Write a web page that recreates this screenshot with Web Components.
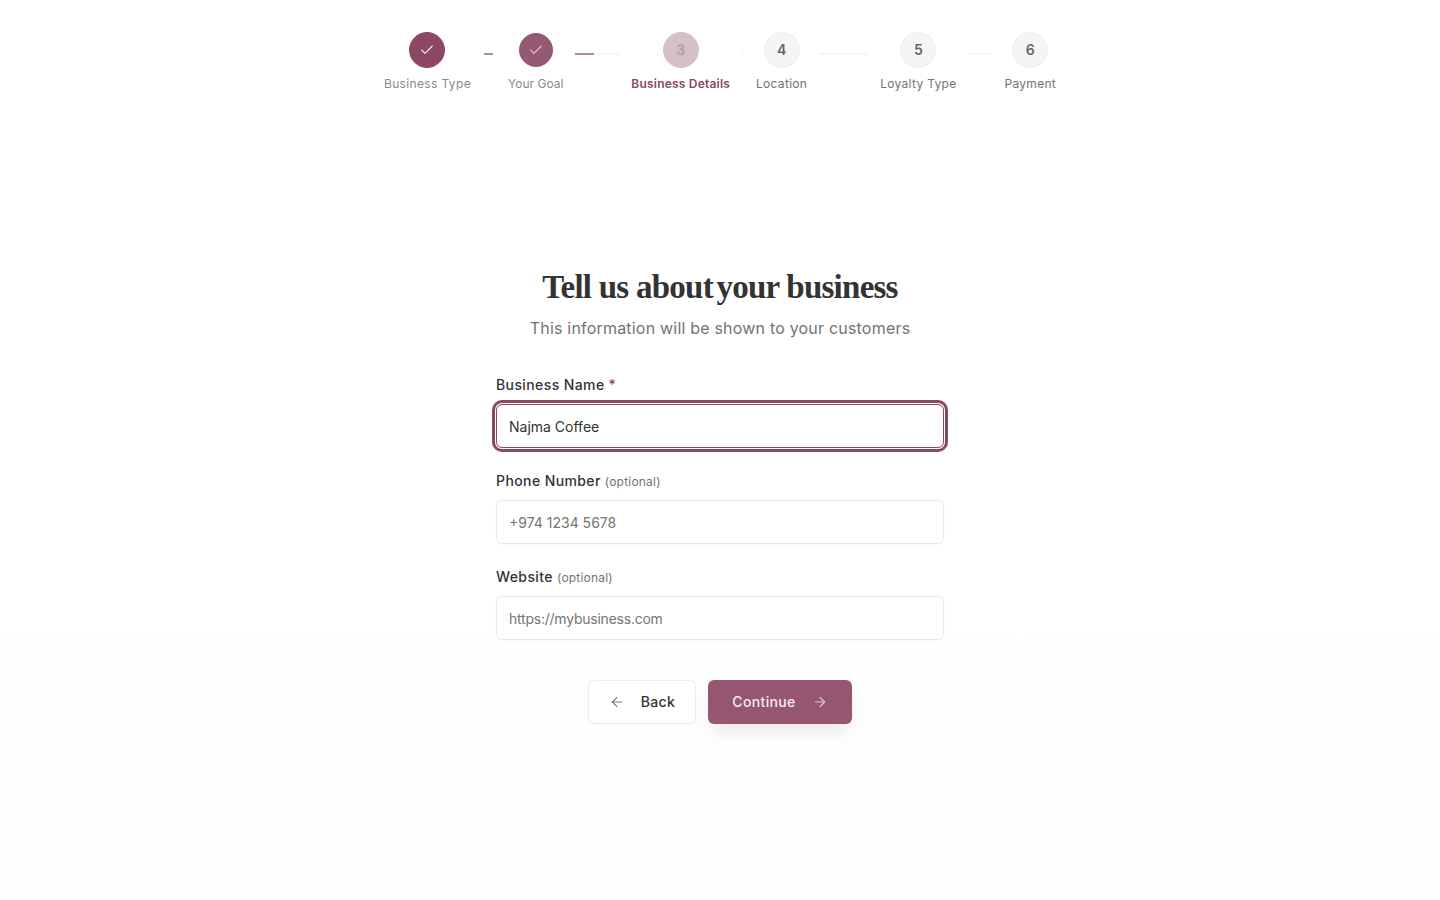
<!DOCTYPE html>
<html><head><meta charset="utf-8"><title>Tell us about your business</title>
<style>
html,body{margin:0;padding:0;height:100%}
body{background:linear-gradient(180deg,#fff 600px,#fdfdfd 909px);font-family:Inter,"Liberation Sans",sans-serif;color:#333;}
</style></head><body>
<onboard-page>
  <step-bar slot="top">
    <step-item state="done" label="Business Type" num="1"></step-item>
    <step-line w="13" f="9" fx="1"></step-line>
    <step-item state="done2" label="Your Goal" num="2"></step-item>
    <step-line w="44" f="19"></step-line>
    <step-item state="current" label="Business Details" num="3"></step-item>
    <step-line w="2" f="0"></step-line>
    <step-item label="Location" num="4"></step-item>
    <step-line w="49" f="0"></step-line>
    <step-item label="Loyalty Type" num="5"></step-item>
    <step-line w="24" f="0"></step-line>
    <step-item label="Payment" num="6"></step-item>
  </step-bar>
  <form-head sub="This information will be shown to your customers"></form-head>
  <form-field label="Business Name" req focus value="Najma Coffee"></form-field>
  <form-field label="Phone Number" opt placeholder="+974 1234 5678"></form-field>
  <form-field label="Website" opt ls="-.23" placeholder="https://mybusiness.com"></form-field>
  <form-actions></form-actions>
</onboard-page>
<script>
function def(name,css,render){
  customElements.define(name,class extends HTMLElement{
    connectedCallback(){
      if(this.shadowRoot)return;
      const r=this.attachShadow({mode:'open'});
      r.innerHTML='<style>'+css+'</style>'+render(this);
    }
  });
}
const a=(e,n)=>e.getAttribute(n);
def('onboard-page',`:host{display:flex;flex-direction:column;align-items:center;min-height:100vh;box-sizing:border-box;padding-top:32px}`,
  ()=>`<slot name="top"></slot><slot></slot>`);
def('step-bar',`:host{display:flex;align-items:flex-start;justify-content:center;width:100%}`,()=>`<slot></slot>`);
def('step-item',`:host{display:flex;flex-direction:column;align-items:center;gap:8px;flex:none}
  .c{width:36px;height:36px;box-sizing:border-box;border-radius:50%;display:flex;align-items:center;justify-content:center;background:#f5f5f5;border:1px solid #eeeeee;color:#666;font-size:14px;font-weight:600;padding-bottom:1px}
  .l{font-size:12px;line-height:16px;color:#737373;letter-spacing:.3px;white-space:nowrap}
  .done{background:#8b4763;border-color:#8b4763;color:#fff;padding:0}
  .done2{background:#965872;border:1px solid #965872;color:#fff;width:34px;height:34px;margin:1px 0;padding:0}
  .current{background:#d7bfca;border:1px solid #d3bfc9;color:#b29ca8}
  .lc{color:#8b4763;font-weight:600;letter-spacing:.2px}
  .l.ld{color:#8a8a8a;letter-spacing:.36px}
  .l.g{letter-spacing:0}`,
  e=>{const s=a(e,'state')||'';const check=s.startsWith('done');
    return `<div class="c ${s}">${check?`<svg width="16" height="16" viewBox="0 0 24 24" fill="none" stroke="${s=='done'?'#f6eef1':'#dcc6d0'}" stroke-width="1.6" stroke-linecap="round" stroke-linejoin="round"><path d="M20 6 9 17l-5-5"/></svg>`:a(e,'num')}</div><div class="l ${s=='current'?'lc':''} ${check?'ld':''} ${s=='done2'?'g':''}">${a(e,'label')}</div>`});
def('step-line',`:host{display:block;flex:none;height:2px;margin:21px 12px 0;background:#f5f5f5;position:relative;overflow:hidden}
  i{display:block;height:100%;background:#ad8a9a}`,
  e=>{e.style.width=a(e,'w')+'px';if(a(e,'fx')){e.style.background='transparent'}return `<i style="width:${a(e,'f')}px;margin-left:${a(e,'fx')||0}px"></i>`});
def('form-head',`:host{display:block;width:448px;text-align:center;margin-top:173px;margin-bottom:35px}
  h1{margin:0;font:700 33px/44px "Liberation Serif",serif;color:#333;letter-spacing:-.75px;white-space:nowrap}
  h1 span{margin-right:-4px}
  p{margin:7px 0 0;font-size:16px;line-height:24px;color:#737373;letter-spacing:.2px;white-space:nowrap}`,
  e=>`<h1>Tell us <span>about</span> your business</h1><p>${a(e,'sub')}</p>`);
def('form-field',`:host{display:block;width:448px;margin-bottom:23px}
  .lb{display:flex;align-items:baseline;gap:4px;height:20px;font-size:14px;line-height:20px;font-weight:500;color:#333;letter-spacing:.4px;margin-bottom:9px;white-space:pre}
  .opt{font-size:12px;font-weight:400;color:#737373;letter-spacing:.2px}
  .req{color:#8b4763}
  .in{height:44px;box-sizing:border-box;border:1px solid #e8e8e8;border-radius:6px;background:#fff;padding:0 12px;display:flex;align-items:center;font-size:14px;color:#757575;box-shadow:0 1px 2px rgba(0,0,0,.03)}
  .f{border-color:#8b4763;box-shadow:0 0 0 1px #fff,0 0 0 4px #8b4763;color:#333}`,
  e=>{const f=e.hasAttribute('focus');const ls=a(e,'ls');
    return `<label class="lb"><span>${a(e,'label')}</span>${e.hasAttribute('req')?'<span class="req">*</span>':''}${e.hasAttribute('opt')?'<span class="opt">(optional)</span>':''}</label><div class="in ${f?'f':''}"${ls?` style="letter-spacing:${ls}px"`:''}>${a(e,'value')||a(e,'placeholder')}</div>`});
def('form-actions',`:host{display:flex;justify-content:center;gap:12px;width:448px;margin-top:17px}
  button{height:44px;box-sizing:border-box;border-radius:6px;font:500 14px Inter,"Liberation Sans",sans-serif;letter-spacing:.35px;display:flex;align-items:center;justify-content:center;cursor:pointer;padding:0;gap:16px}
  button span{margin-bottom:2px}
  .b{width:108px;background:#fff;border:1px solid #ececec;color:#333;box-shadow:0 1px 2px rgba(0,0,0,.03)}
  .c{width:144px;background:#965570;border:0;color:#f5ecf0;box-shadow:0 10px 20px -4px rgba(139,71,99,.15)}`,
  ()=>`<button class="b"><svg width="16" height="16" viewBox="0 0 24 24" fill="none" stroke="#777" stroke-width="1.6" stroke-linecap="round" stroke-linejoin="round"><path d="m12 19-7-7 7-7"/><path d="M19 12H5"/></svg><span>Back</span></button><button class="c"><span>Continue</span><svg width="16" height="16" viewBox="0 0 24 24" fill="none" stroke="#e3d0d8" stroke-width="1.6" stroke-linecap="round" stroke-linejoin="round"><path d="M5 12h14"/><path d="m12 5 7 7-7 7"/></svg></button>`);
</script>
</body></html>
